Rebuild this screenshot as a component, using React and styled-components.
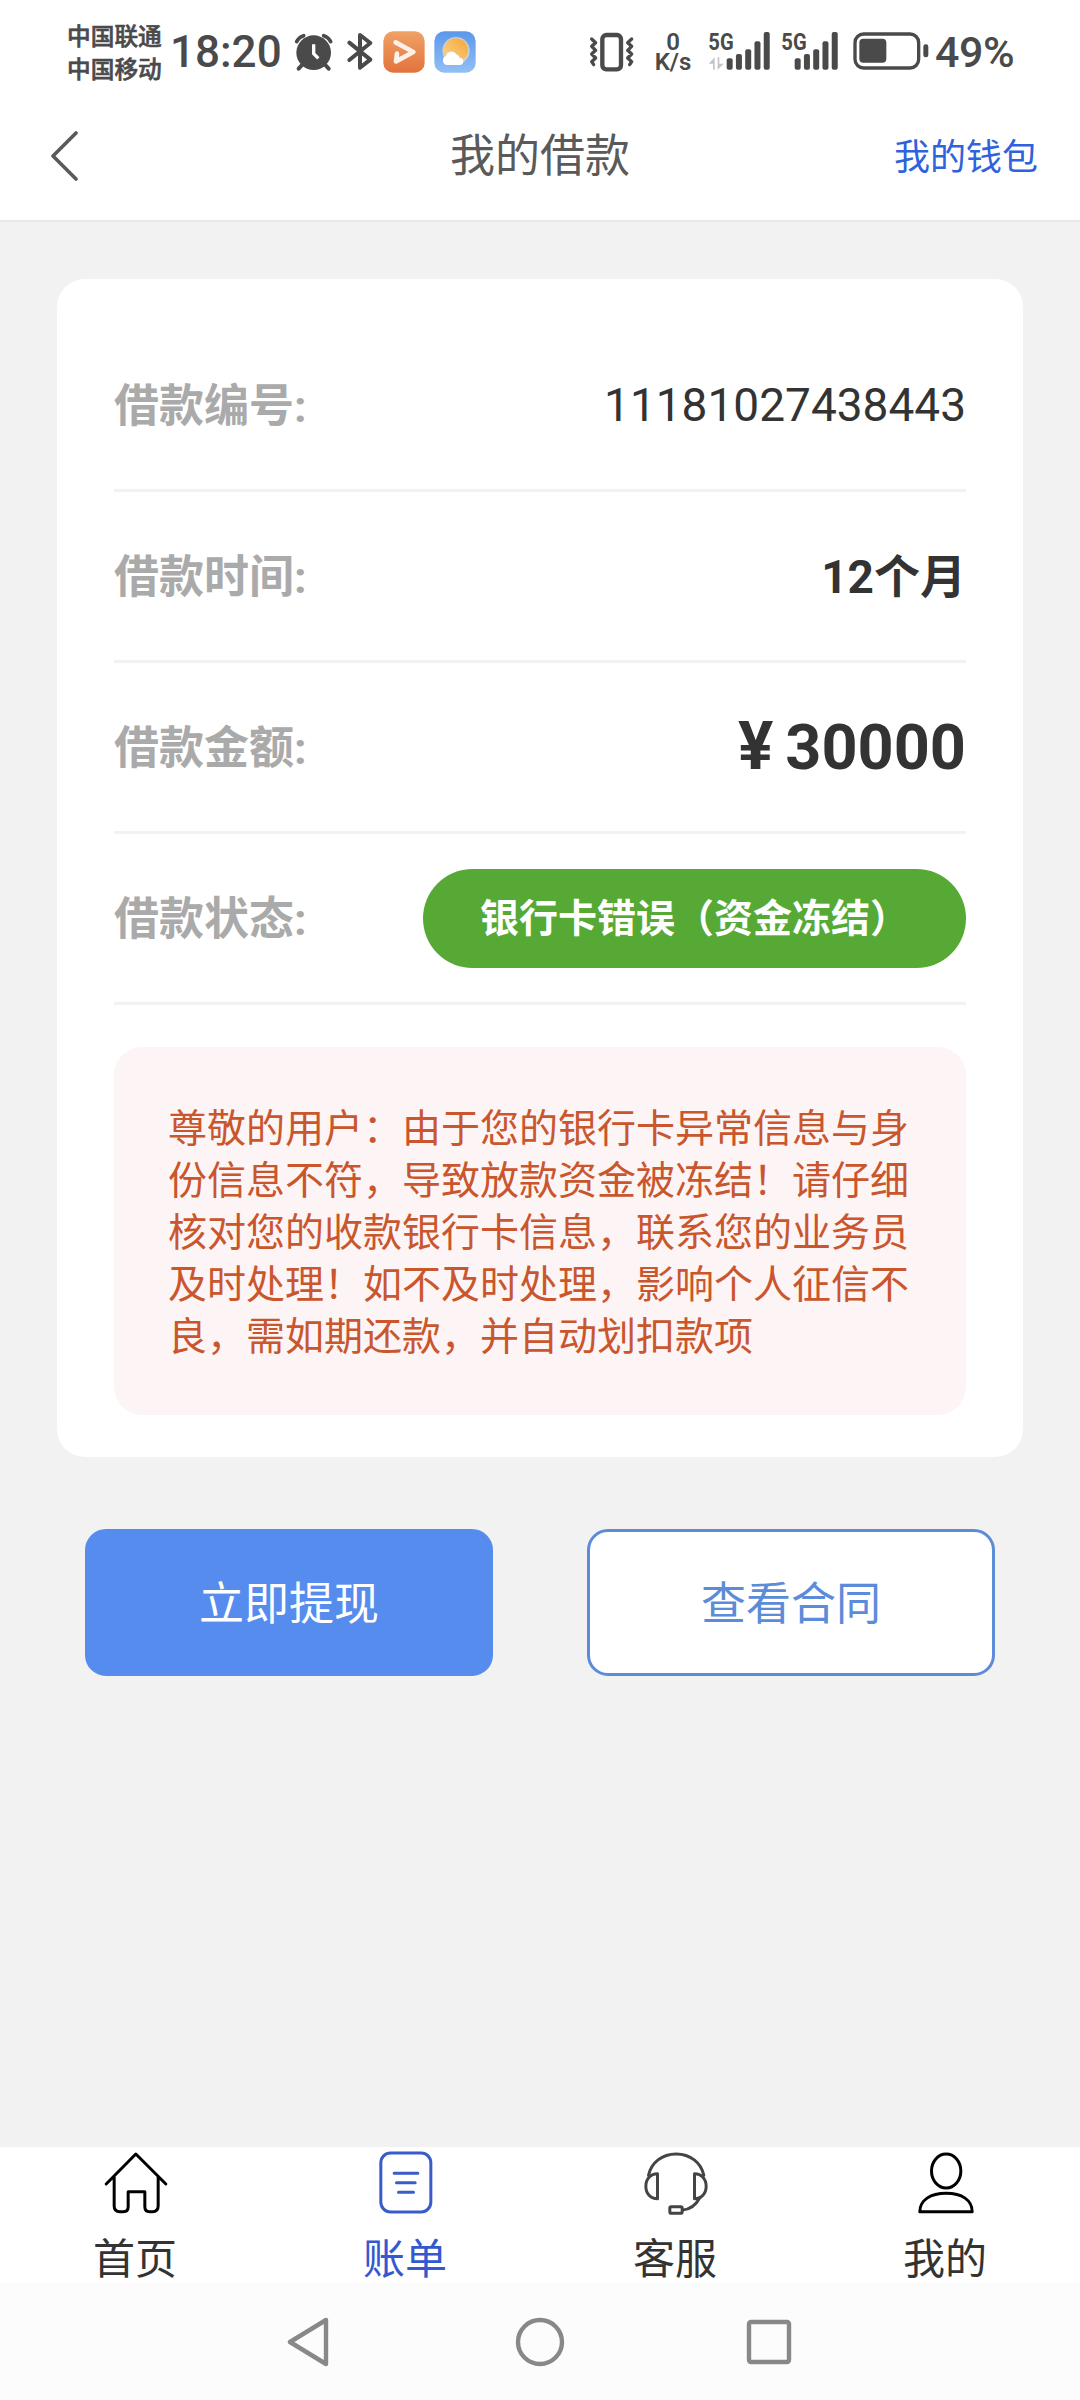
import React from 'react';
import styled, { createGlobalStyle } from 'styled-components';

const details = [
  { label: '借款编号:', value: '11181027438443', type: 'number' },
  { label: '借款时间:', value: '12个月', type: 'term' },
  { label: '借款金额:', value: '30000', type: 'amount' },
  { label: '借款状态:', value: '银行卡错误（资金冻结）', type: 'status' },
];

const notice =
  '尊敬的用户：由于您的银行卡异常信息与身份信息不符，导致放款资金被冻结！请仔细核对您的收款银行卡信息，联系您的业务员及时处理！如不及时处理，影响个人征信不良，需如期还款，并自动划扣款项';

const SIGNAL_BARS = [174, 161, 147, 123, 95];

const AlarmIcon = () => (
  <StatusIcon width="40" height="44" viewBox="765 89 120 132">
    <circle cx="824" cy="157" r="52" fill="#4a4a4a" />
    <g fill="none" stroke="#4a4a4a" strokeLinecap="round">
      <path d="M773 124Q780 110 794 106M875 124Q868 110 854 106" strokeWidth="11" />
      <path d="M789 194L779 205M859 194L869 205" strokeWidth="12" />
    </g>
    <path d="M824 132V160L838 174" fill="none" stroke="#fff" strokeWidth="10" />
  </StatusIcon>
);

const BluetoothIcon = () => (
  <StatusIcon width="28" height="44" viewBox="918 89 84 132">
    <path
      d="M928 127L991 178L960 202V104L991 128L928 179"
      fill="none"
      stroke="#4a4a4a"
      strokeWidth="12"
      strokeLinecap="round"
      strokeLinejoin="round"
    />
  </StatusIcon>
);

const VideoIcon = () => (
  <StatusIcon width="42" height="44" viewBox="1031 89 126 132">
    <defs>
      <linearGradient id="video" x1="0" y1="0" x2="0" y2="1">
        <stop offset="0" stopColor="#efa266" />
        <stop offset="1" stopColor="#e3733c" />
      </linearGradient>
    </defs>
    <rect x="1032" y="93" width="124" height="124" rx="30" fill="url(#video)" />
    <path
      d="M1069 126L1122 155L1070 183L1073 160"
      fill="none"
      stroke="#fdf0e6"
      strokeWidth="14"
      strokeLinecap="round"
      strokeLinejoin="round"
    />
  </StatusIcon>
);

const WeatherIcon = () => (
  <StatusIcon width="42" height="44" viewBox="1184 89 126 132">
    <defs>
      <linearGradient id="sky" x1="0" y1="0" x2="0" y2="1">
        <stop offset="0" stopColor="#5b97ea" />
        <stop offset="1" stopColor="#93bff5" />
      </linearGradient>
      <linearGradient id="sun" x1="1" y1="0" x2="0" y2="1">
        <stop offset="0" stopColor="#f3a63c" />
        <stop offset="1" stopColor="#fbd58a" />
      </linearGradient>
    </defs>
    <rect x="1185" y="93" width="124" height="124" rx="30" fill="url(#sky)" />
    <circle cx="1250" cy="151" r="41" fill="#d9dccb" opacity="0.8" />
    <circle cx="1250" cy="150" r="36" fill="url(#sun)" />
    <path
      d="M1223 194a14 14 0 0 1-3-27a17 17 0 0 1 31-5a14 14 0 0 1 10 10a11 11 0 0 1 0 22z"
      fill="#fff"
    />
  </StatusIcon>
);

const VibrateIcon = () => (
  <StatusIcon width="48" height="44" viewBox="58 89 144 132">
    <g fill="none" stroke="#4a4a4a" strokeLinecap="round" strokeLinejoin="round">
      <rect x="101" y="104" width="56" height="103" rx="12" strokeWidth="13" />
      <path
        d="M69 116L81 127L69 138L81 150L69 161L81 173L69 184L75 193M189 116L177 127L189 138L177 150L189 161L177 173L189 184L183 193"
        strokeWidth="10"
      />
    </g>
  </StatusIcon>
);

const Signal = ({ active, labelX = 417 }) => (
  <StatusIcon width="62" height="44" viewBox="416 89 186 132">
    <SignalText x={labelX} y="150" textLength="76" lengthAdjust="spacingAndGlyphs">
      5G
    </SignalText>
    {active && (
      <path d="M418 190L436 171V208H431V190ZM463 190L445 208V171H450V190Z" fill="#c4c4c4" />
    )}
    {SIGNAL_BARS.map((top, index) => (
      <rect
        key={top}
        x={472 + index * 27.8}
        y={top}
        width="18"
        height={208 - top}
        rx="6"
        fill="#4a4a4a"
      />
    ))}
  </StatusIcon>
);

const BatteryIcon = () => (
  <StatusIcon width="76" height="44" viewBox="851 89 228 132">
    <rect x="857" y="101" width="191" height="102" rx="26" fill="none" stroke="#4a4a4a" strokeWidth="10" />
    <rect x="870" y="115" width="81" height="72" rx="12" fill="#4a4a4a" />
    <rect x="1062" y="132" width="15" height="39" rx="7" fill="#4a4a4a" />
  </StatusIcon>
);

const BackIcon = () => (
  <svg width="30" height="52" viewBox="0 0 30 52">
    <path d="M26 4L3 27L26 50" fill="none" stroke="#5a5a5a" strokeWidth="3.6" strokeLinecap="round" strokeLinejoin="round" />
  </svg>
);

const HomeIcon = () => (
  <TabIcon viewBox="185 60 200 195">
    <path d="M197 162L286 72L376 162M221 140V228Q221 245 238 245H248Q263 245 263 230V185H313V230Q313 245 328 245H336Q353 245 353 228V140" />
  </TabIcon>
);

const BillIcon = () => (
  <TabIcon viewBox="995 60 200 195">
    <rect x="1021" y="69" width="150" height="177" rx="29" />
    <path d="M1061 130H1132M1068 158H1124M1074 187H1119" />
  </TabIcon>
);

const ServiceIcon = () => (
  <TabIcon viewBox="245 60 200 195">
    <path d="M264 136C272 98 305 72 347 72S422 98 430 136" />
    <path d="M291 131V206C270 206 256 191 256 169C256 147 270 131 291 131ZM402 131V206C423 206 437 191 437 169C437 147 423 131 402 131Z" />
    <path d="M418 203C406 225 390 238 366 240" />
    <rect x="328" y="230" width="37" height="20" rx="4" />
  </TabIcon>
);

const UserIcon = () => (
  <TabIcon viewBox="1055 60 200 195">
    <ellipse cx="1157" cy="123" rx="44" ry="51" />
    <path d="M1078 245C1078 210 1110 190 1157 190S1235 210 1235 245Z" />
  </TabIcon>
);

const tabs = [
  { name: '首页', icon: HomeIcon, iconColor: '#000' },
  { name: '账单', icon: BillIcon, iconColor: '#3a5cc8', active: true },
  { name: '客服', icon: ServiceIcon, iconColor: '#444' },
  { name: '我的', icon: UserIcon, iconColor: '#000' },
];

const DetailValue = ({ type, value }) => {
  if (type === 'status') return <StatusPill>{value}</StatusPill>;
  if (type === 'amount')
    return (
      <Amount>
        <Yen>¥</Yen>
        {value}
      </Amount>
    );
  return <Value $bold={type === 'term'}>{value}</Value>;
};

export default function App() {
  return (
    <Page>
      <GlobalStyle />
      <StatusBar>
        <Carriers>
          <div>中国联通</div>
          <div>中国移动</div>
        </Carriers>
        <Clock>18:20</Clock>
        <LeftIcons>
          <AlarmIcon />
          <BluetoothIcon />
          <VideoIcon />
          <WeatherIcon />
        </LeftIcons>
        <RightIcons>
          <VibrateIcon />
          <Speed>
            <div>0</div>
            <div>K/s</div>
          </Speed>
          <Signals>
            <Signal active />
            <Signal labelX={432} />
          </Signals>
          <BatteryIcon />
        </RightIcons>
        <Percent>49%</Percent>
      </StatusBar>
      <Header>
        <BackIcon />
        <Title>我的借款</Title>
        <WalletLink>我的钱包</WalletLink>
      </Header>
      <Content>
        <Card>
          {details.map(({ label, value, type }) => (
            <Row key={label}>
              <Label>{label}</Label>
              <DetailValue type={type} value={value} />
            </Row>
          ))}
          <Notice>{notice}</Notice>
        </Card>
        <Actions>
          <ActionButton $primary>立即提现</ActionButton>
          <ActionButton>查看合同</ActionButton>
        </Actions>
      </Content>
      <TabBar>
        {tabs.map(({ name, icon: Icon, iconColor, active }) => (
          <Tab key={name} $active={active} $iconColor={iconColor}>
            <Icon />
            <span>{name}</span>
          </Tab>
        ))}
      </TabBar>
      <SystemNav>
        <svg width="48" height="52" viewBox="0 0 48 52">
          <path d="M39 4V48L3 26Z" />
        </svg>
        <svg width="52" height="52" viewBox="0 0 52 52">
          <circle cx="26" cy="26" r="22" />
        </svg>
        <svg width="52" height="52" viewBox="0 0 52 52">
          <rect x="6" y="6" width="40" height="40" rx="2" />
        </svg>
      </SystemNav>
    </Page>
  );
}

const GlobalStyle = createGlobalStyle`
  * {
    box-sizing: border-box;
  }
  body {
    margin: 0;
    font-family: Roboto, 'Noto Sans CJK SC', sans-serif;
  }
`;

const Page = styled.div`
  display: flex;
  flex-direction: column;
  width: 1080px;
  height: 2400px;
  background: #f2f2f2;
  color: #333;
`;

const StatusBar = styled.div`
  display: flex;
  align-items: center;
  height: 103px;
  padding: 0 66px 0 67px;
  background: #fff;
  color: #4a4a4a;
  font-weight: 500;
`;

const StatusIcon = styled.svg`
  display: block;
  flex: none;
  overflow: visible;
`;

const Carriers = styled.div`
  width: 104px;
  padding-top: 5px;
  font-size: 23.7px;
  line-height: 33px;
  white-space: nowrap;
  -webkit-text-stroke: 0.6px #4a4a4a;
`;

const Clock = styled.div`
  width: 124px;
  margin-left: -1px;
  font-size: 44px;
  line-height: 44px;
`;

const LeftIcons = styled.div`
  display: flex;
  align-items: center;
  gap: 9px;

  svg:nth-child(2) {
    margin-left: 3px;
  }
`;

const RightIcons = styled.div`
  display: flex;
  align-items: center;
  margin-left: auto;
`;

const Speed = styled.div`
  width: 46px;
  margin: 0 12px 0 14px;
  font-size: 24px;
  line-height: 20px;
  font-weight: 600;
  text-align: center;
`;

const Signals = styled.div`
  display: flex;
  gap: 6px;
  margin-right: 15px;
`;

const SignalText = styled.text`
  font-size: 74px;
  font-weight: 700;
  fill: #4a4a4a;
`;

const Percent = styled.div`
  width: 79px;
  margin-left: 6px;
  font-size: 43px;
  line-height: 44px;
  letter-spacing: -0.5px;
`;

const Header = styled.header`
  display: grid;
  grid-template-columns: 1fr auto 1fr;
  align-items: center;
  height: 119px;
  padding: 0 42px 14px 50px;
  background: #fff;
  border-bottom: 2px solid #e8e8e8;
`;

const Title = styled.h1`
  margin: 4px 0 0 -8px;
  color: #5a5a5a;
  font-size: 45px;
  font-weight: 400;
  line-height: 60px;
`;

const WalletLink = styled.a`
  padding-bottom: 2px;
  color: #2f62dc;
  font-size: 36px;
  text-align: right;
`;

const Content = styled.main`
  flex: 1;
  padding: 57px 57px 0;
`;

const Card = styled.section`
  padding: 42px 57px;
  background: #fff;
  border-radius: 28px;
`;

const Row = styled.div`
  display: flex;
  align-items: center;
  justify-content: space-between;
  height: 171px;
  border-bottom: 3px solid #f2f2f2;
`;

const Label = styled.span`
  padding-bottom: 6px;
  color: #aaa;
  font-size: 45px;
  font-weight: 700;
`;

const Value = styled.span`
  padding-bottom: ${(props) => (props.$bold ? '6px' : 0)};
  font-size: 46px;
  font-weight: ${(props) => (props.$bold ? 700 : 400)};
`;

const Amount = styled.span`
  padding-bottom: 2px;
  font-size: 63px;
  font-weight: 700;
`;

const Yen = styled.span`
  margin-right: 12px;
  font-size: 66px;
`;

const StatusPill = styled.span`
  height: 99px;
  padding: 0 57px;
  border-radius: 50px;
  background: #56a935;
  color: #fff;
  font-size: 39px;
  font-weight: 700;
  line-height: 100px;
  white-space: nowrap;
`;

const Notice = styled.p`
  margin: 42px 0 0;
  padding: 56px 54px 52px;
  border-radius: 28px;
  background: #fcf4f5;
  color: #c9562c;
  font-size: 39px;
  line-height: 52px;
`;

const Actions = styled.div`
  display: flex;
  justify-content: space-between;
  margin-top: 72px;
  padding: 0 28px;
`;

const ActionButton = styled.button`
  width: 408px;
  height: 147px;
  padding: 0 0 5px;
  border: 3px solid ${(props) => (props.$primary ? '#568ced' : '#5b8bd9')};
  border-radius: 21px;
  background: ${(props) => (props.$primary ? '#568ced' : '#fff')};
  color: ${(props) => (props.$primary ? '#fff' : '#5b8bd9')};
  font-family: inherit;
  font-size: 45px;
`;

const TabBar = styled.nav`
  display: grid;
  grid-template-columns: repeat(4, 1fr);
  height: 136px;
  background: #fff;
`;

const TabIcon = styled.svg`
  width: 67px;
  height: 65px;
  fill: none;
  stroke-width: 9;
  stroke-linecap: round;
  stroke-linejoin: round;
`;

const Tab = styled.div`
  display: flex;
  flex-direction: column;
  align-items: center;
  gap: 24px;
  padding-top: 3px;
  color: ${(props) => (props.$active ? '#3358cf' : '#333')};
  font-size: 42px;
  line-height: 42px;

  svg {
    stroke: ${(props) => props.$iconColor};
  }
`;

const SystemNav = styled.div`
  display: grid;
  grid-template-columns: repeat(3, 229px);
  justify-content: center;
  place-items: center;
  height: 117px;
  background: #fcfcfc;

  svg {
    fill: none;
    stroke: #888;
    stroke-width: 4.4;
    stroke-linejoin: round;
  }
`;
